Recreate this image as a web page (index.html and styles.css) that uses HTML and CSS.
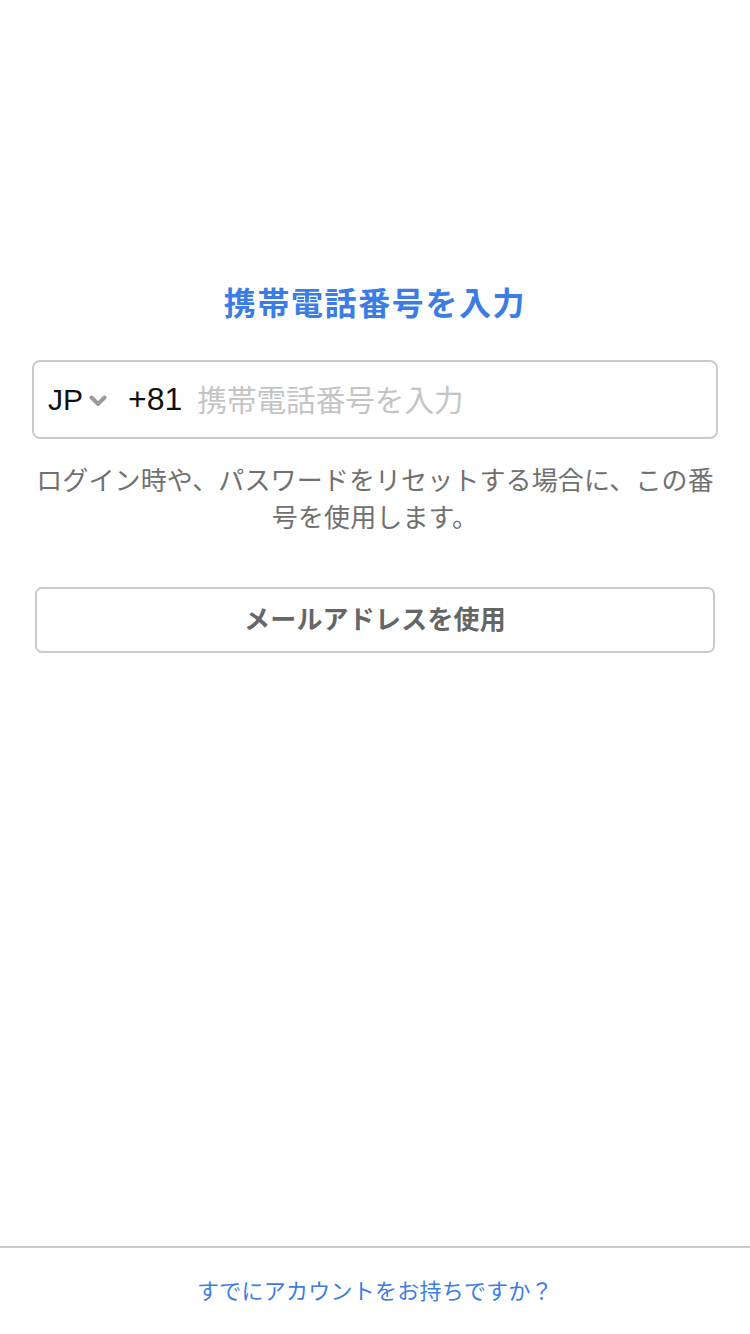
FILE: index.html
```html
<!DOCTYPE html>
<html lang="ja">
<head>
<meta charset="utf-8">
<title>携帯電話番号を入力</title>
<link rel="stylesheet" href="styles.css">
</head>
<body>
<div class="page">
  <main class="main">
    <h1 class="title">携帯電話番号を入力</h1>
    <div class="phone-field">
      <span class="country">JP</span>
      <svg class="chevron" width="18" height="12" viewBox="0 0 18 12" aria-hidden="true">
        <polyline points="2.5,2.5 9,9 15.5,2.5" fill="none" stroke="#9a9a9a" stroke-width="4" stroke-linecap="round" stroke-linejoin="round"/>
      </svg>
      <span class="dial">+81</span>
      <input class="phone-input" type="tel" placeholder="携帯電話番号を入力">
    </div>
    <p class="hint">ログイン時や、パスワードをリセットする場合に、この番号を使用します。</p>
    <button class="email-btn" type="button">メールアドレスを使用</button>
  </main>
  <footer class="footer">
    <a class="login-link" href="#">すでにアカウントをお持ちですか？</a>
  </footer>
</div>
</body>
</html>
```

FILE: styles.css
```css
* {
  box-sizing: border-box;
}

html, body {
  margin: 0;
  padding: 0;
  background: #ffffff;
}

body {
  font-family: "Liberation Sans", "Noto Sans CJK JP", sans-serif;
}

.page {
  min-height: 100vh;
  display: flex;
  flex-direction: column;
}

.main {
  display: flex;
  flex-direction: column;
  padding-top: 281px;
}

.title {
  margin: 0;
  font-family: "Noto Sans CJK JP", sans-serif;
  font-size: 32px;
  line-height: 40px;
  font-weight: 700;
  color: #3b7de4;
  text-align: center;
  letter-spacing: 1.6px;
}

.phone-field {
  margin: 39px 32px 0;
  height: 79px;
  border: 2px solid #c9cbce;
  border-radius: 8px;
  display: flex;
  align-items: center;
  padding-left: 14px;
}

.country {
  font-size: 30px;
  color: #111111;
}

.chevron {
  margin-left: 6px;
  margin-top: 2px;
  flex: none;
}

.dial {
  margin-left: 21px;
  font-size: 32px;
  color: #111111;
}

.phone-input {
  flex: 1;
  min-width: 0;
  margin-left: 15px;
  margin-bottom: 2px;
  border: none;
  outline: none;
  background: transparent;
  font-family: "Noto Sans CJK JP", sans-serif;
  font-size: 29.6px;
  color: #111111;
  padding: 0;
}

.phone-input::placeholder {
  color: #c4c4c4;
}

.hint {
  margin: 21px 34px 0;
  font-family: "Noto Sans CJK JP", sans-serif;
  font-size: 26px;
  line-height: 37px;
  color: #707070;
  text-align: center;
  letter-spacing: 0.12px;
}

.email-btn {
  margin: 53px 35px 0;
  height: 66px;
  border: 2px solid #c9cbce;
  border-radius: 7px;
  background: #ffffff;
  font-family: "Noto Sans CJK JP", sans-serif;
  font-size: 26px;
  font-weight: 700;
  color: #666666;
  padding: 0 0 5px;
  letter-spacing: 0.2px;
}

.footer {
  margin-top: auto;
  height: 88px;
  border-top: 2px solid #c9cbce;
  display: flex;
  align-items: center;
  justify-content: center;
}

.login-link {
  font-family: "Noto Sans CJK JP", sans-serif;
  font-size: 22px;
  color: #3b7de4;
  text-decoration: none;
  margin-bottom: 5px;
  letter-spacing: 0.25px;
}
```
